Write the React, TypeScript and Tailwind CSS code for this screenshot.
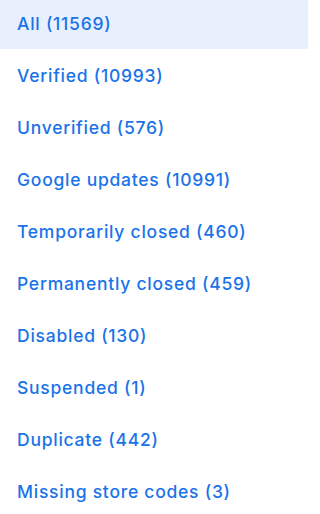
const FILTERS = [
    "All (11569)",
    "Verified (10993)",
    "Unverified (576)",
    "Google updates (10991)",
    "Temporarily closed (460)",
    "Permanently closed (459)",
    "Disabled (130)",
    "Suspended (1)",
    "Duplicate (442)",
    "Missing store codes (3)",
];

export default function App() {
    return (
        <div className="w-[308px] h-[514px] overflow-hidden bg-white font-['Inter',sans-serif]">
            <ul className="-mt-[3px]">
                {FILTERS.map((label, i) => (
                    <li
                        key={label}
                        className={`h-[52px] flex items-center pl-[17px] pt-[2px] text-[17.5px] tracking-[0.75px] font-medium text-[#1a73e8] ${
                            i === 0 ? "bg-[#e8f0fe]" : ""
                        }`}
                    >
                        {label}
                    </li>
                ))}
            </ul>
        </div>
    );
}
